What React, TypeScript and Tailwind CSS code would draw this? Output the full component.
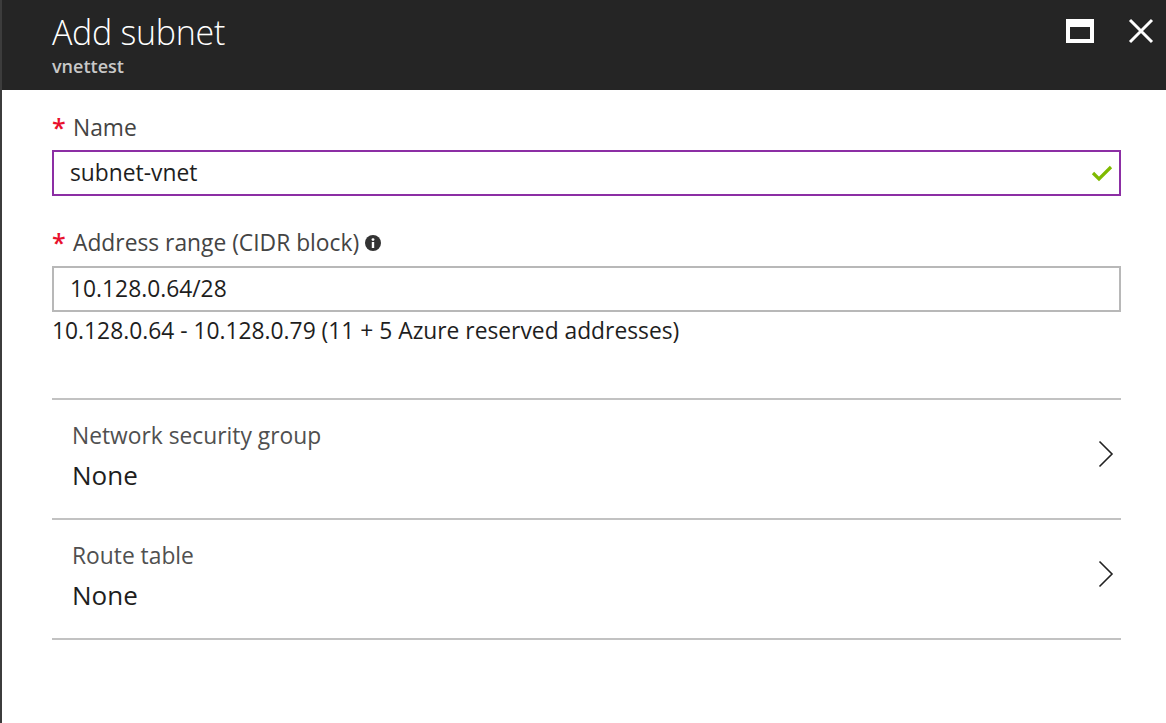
import React from "react";

const font = { fontFamily: '"Segoe UI", "Open Sans", "Noto Sans", sans-serif' };

function Chevron() {
  return (
    <svg width="16" height="28" viewBox="0 0 16 28" className="shrink-0 mt-[40px]">
      <path d="M1.5 1.5 L14 14 L1.5 26.5" fill="none" stroke="#222" strokeWidth="1.6" />
    </svg>
  );
}

function PickerRow({ label }: { label: string }) {
  return (
    <div className="flex items-start justify-between border-b-2 border-[#c2c2c2] h-[120px] pl-[20px] pr-[7px]">
      <div className="flex flex-col pt-[23px]">
        <div className="text-[22.8px] leading-[26px] text-[#505050]">{label}</div>
        <div className="text-[26px] leading-[32px] text-[#1e1e1e] mt-[10px]">None</div>
      </div>
      <Chevron />
    </div>
  );
}

function Star() {
  return (
    <span className="text-[#e8112d] text-[25px] w-[21px] leading-[30px] -mt-[2px] font-semibold">*</span>
  );
}

export default function App() {
  return (
    <div className="w-[1166px] h-[723px] bg-white border-l-2 border-[#3c3c3c] overflow-hidden" style={font}>
      <div className="h-[90px] bg-[#252525] flex items-start justify-between pl-[50px] pr-[12px]">
        <div className="flex flex-col">
          <div className="text-[34px] leading-[40px] font-light text-white mt-[12px] tracking-[-0.3px]">Add subnet</div>
          <div className="text-[18px] leading-[20px] font-semibold text-[#c8c8c8] mt-[4px]">vnettest</div>
        </div>
        <div className="flex items-center gap-[34px] mt-[18px]">
          <div className="w-[28px] h-[24px] border-[4px] border-t-[8px] border-white" />
          <svg width="26" height="26" viewBox="0 0 26 26">
            <path d="M2 2 L24 24 M24 2 L2 24" stroke="white" strokeWidth="3" />
          </svg>
        </div>
      </div>
      <div className="pl-[50px] pr-[45px] pt-[23px]">
        <div className="flex items-center h-[30px] text-[22.8px] text-[#444]">
          <Star />
          <span className="leading-[30px]">Name</span>
        </div>
        <div className="mt-[7px] h-[46px] border-2 border-[#8c2ea4] flex items-center justify-between pl-[16px] pr-[6px] text-[22.8px] text-[#1e1e1e]">
          <span>subnet-vnet</span>
          <svg width="22" height="18" viewBox="0 0 22 18">
            <path d="M2 9 L8 15 L20 3" fill="none" stroke="#7fba00" strokeWidth="3.2" />
          </svg>
        </div>
        <div className="flex items-center h-[30px] mt-[32px] text-[22.8px] text-[#444]">
          <Star />
          <span className="leading-[30px]">Address range (CIDR block)</span>
          <svg width="16" height="16" viewBox="0 0 16 16" className="ml-[6px]">
            <circle cx="8" cy="8" r="8" fill="#333" />
            <rect x="6.8" y="7" width="2.4" height="6" fill="white" />
            <circle cx="8" cy="4.6" r="1.4" fill="white" />
          </svg>
        </div>
        <div className="mt-[8px] h-[46px] border-2 border-[#b8b8b8] flex items-center pl-[16px] text-[22.8px] text-[#1e1e1e]">
          <span>10.128.0.64/28</span>
        </div>
        <div className="mt-[5px] text-[22.8px] leading-[28px] text-[#1e1e1e]">
          10.128.0.64 - 10.128.0.79 (11 + 5 Azure reserved addresses)
        </div>
        <div className="mt-[53px] border-t-2 border-[#c2c2c2]">
          <PickerRow label="Network security group" />
          <PickerRow label="Route table" />
        </div>
      </div>
    </div>
  );
}
